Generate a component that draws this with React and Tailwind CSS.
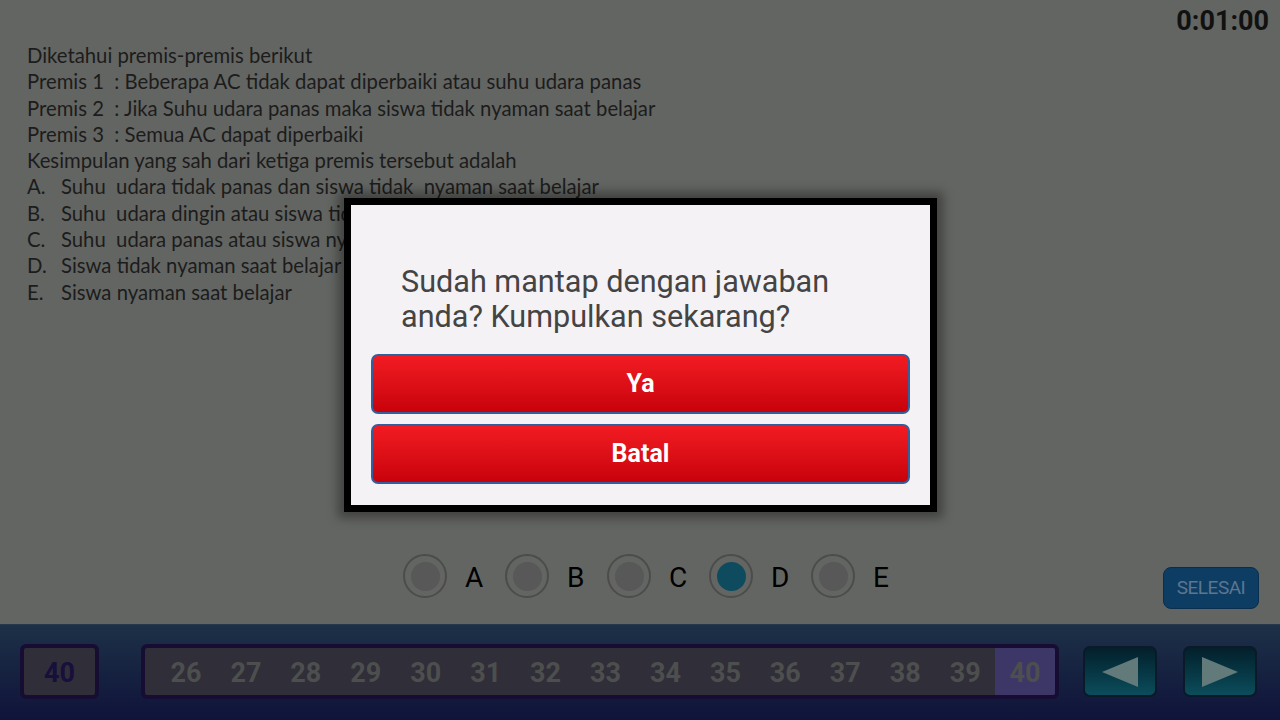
import React, { useState } from 'react';

// Quiz page in "submit?" confirm state: question, answer choices,
// number strip at the bottom and a modal asking to hand in.
const options = [
  { label: 'A.', text: 'Suhu  udara tidak panas dan siswa tidak  nyaman saat belajar' },
  { label: 'B.', text: 'Suhu  udara dingin atau siswa tidak nyaman saat belajar' },
  { label: 'C.', text: 'Suhu  udara panas atau siswa nyaman saat belajar' },
  { label: 'D.', text: 'Siswa tidak nyaman saat belajar' },
  { label: 'E.', text: 'Siswa nyaman saat belajar' },
];

const numbers = [26, 27, 28, 29, 30, 31, 32, 33, 34, 35, 36, 37, 38, 39, 40];

const Choice = ({ letter, selected }) => (
  <div className="w-[102px] flex items-center">
    <div className="w-[44px] h-[44px] rounded-full border-2 border-[#4c4d4b] flex items-center justify-center">
      <div className={`w-[29px] h-[29px] rounded-full ${selected ? 'bg-[#0f4b5f]' : 'bg-[#575857]'}`} />
    </div>
    <span className="ml-[18px] mt-[4px] text-[28px] leading-none text-black font-['Roboto',sans-serif]">{letter}</span>
  </div>
);

const App = () => {
  const [answer] = useState('D');

  return (
    <div className="w-[1280px] h-[720px] overflow-hidden relative flex flex-col font-['Roboto',sans-serif]">
      {/* question area */}
      <div className="h-[624px] bg-[#636562] flex flex-col">
        <div className="h-[42px] flex justify-end items-center pr-[11px] pt-[1px]">
          <span className="text-[27px] font-bold text-[#111111] leading-none">0:01:00</span>
        </div>

        <div className="pl-[27px] text-[#1c1c1c] text-[20.3px] leading-[26.3px] font-['Lato',sans-serif]">
          <div>Diketahui premis-premis berikut</div>
          <div>Premis 1&nbsp; : Beberapa AC tidak dapat diperbaiki atau suhu udara panas</div>
          <div>Premis 2&nbsp; : Jika Suhu udara panas maka siswa tidak nyaman saat belajar</div>
          <div>Premis 3&nbsp; : Semua AC dapat diperbaiki</div>
          <div>Kesimpulan yang sah dari ketiga premis tersebut adalah</div>
          {options.map((o) => (
            <div key={o.label} className="flex">
              <span className="w-[34px]">{o.label}</span>
              <span className="whitespace-pre">{o.text}</span>
            </div>
          ))}
        </div>

        <div className="flex-1" />

        <div className="flex items-start pl-[403px] pr-[21px] pb-[15px]">
          <div className="flex mt-[-13px]">
            {['A', 'B', 'C', 'D', 'E'].map((l) => (
              <Choice key={l} letter={l} selected={answer === l} />
            ))}
          </div>
          <button className="ml-auto w-[96px] h-[42px] rounded-[8px] bg-[#0e3d63] border border-[#0a2e4e] text-[#5c7590] text-[19px] tracking-tight">
            SELESAI
          </button>
        </div>
      </div>

      {/* bottom navigation */}
      <div className="h-[96px] bg-gradient-to-b from-[#1d3047] to-[#10133a] border-t border-[#26384a] flex items-center pl-[20px] pb-[2px]">
        <div className="w-[79px] h-[55px] rounded-[6px] border-[4px] border-[#170d33] bg-[#302e38] flex items-center justify-center">
          <span className="text-[27px] font-bold text-[#170f3c] mt-[3px]">40</span>
        </div>

        <div className="ml-[42px] w-[918px] h-[55px] rounded-[6px] border-[4px] border-[#170d33] bg-[#302e38] flex items-stretch pl-[11px] overflow-hidden">
          {numbers.map((n) => (
            <div
              key={n}
              className={`w-[60px] flex items-center justify-center pt-[3px] text-[27px] font-bold text-[#4d4e4e] ${n === 40 ? 'bg-[#3c3766]' : ''}`}
            >
              {n}
            </div>
          ))}
        </div>

        <button className="ml-[24px] w-[74px] h-[51px] rounded-[7px] border-2 border-[#0a1a28] bg-gradient-to-b from-[#03202c] to-[#0c4d5b] flex items-center justify-center">
          <svg width="36" height="30" viewBox="0 0 36 30">
            <polygon points="36,0 36,30 0,15" fill="#637a7b" />
          </svg>
        </button>
        <button className="ml-[26px] w-[74px] h-[51px] rounded-[7px] border-2 border-[#0a1a28] bg-gradient-to-b from-[#03202c] to-[#0c4d5b] flex items-center justify-center">
          <svg width="36" height="30" viewBox="0 0 36 30">
            <polygon points="0,0 0,30 36,15" fill="#637a7b" />
          </svg>
        </button>
      </div>

      {/* confirm dialog over the page */}
      <div className="absolute left-[344px] top-[198px] w-[593px] h-[314px] bg-black p-[7px] shadow-[0_0_10px_6px_rgba(0,0,0,0.35)]">
        <div className="w-full h-full bg-[#f5f2f6] flex flex-col px-[20px] pt-[59px]">
          <div className="pl-[30px] text-[30.6px] leading-[35px] text-[#444444]">
            Sudah mantap dengan jawaban
            <br />
            anda? Kumpulkan sekarang?
          </div>
          <button className="mt-[20px] h-[60px] rounded-[7px] border-2 border-[#33609a] bg-gradient-to-b from-[#f21b22] to-[#c8020a] text-white text-[25px] font-bold">
            Ya
          </button>
          <button className="mt-[10px] h-[60px] rounded-[7px] border-2 border-[#33609a] bg-gradient-to-b from-[#f21b22] to-[#c8020a] text-white text-[25px] font-bold">
            Batal
          </button>
        </div>
      </div>
    </div>
  );
};

export default App;
